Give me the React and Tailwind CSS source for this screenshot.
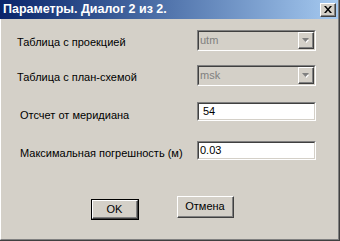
import React from "react";

const sunken =
  "border-t border-l border-t-[#808080] border-l-[#808080] border-b border-r border-b-white border-r-white";
const sunkenInner =
  "border-t border-l border-t-[#404040] border-l-[#404040] border-b border-r border-b-[#d4d0c8] border-r-[#d4d0c8]";
const raised =
  "border-t border-l border-t-white border-l-white border-b border-r border-b-[#404040] border-r-[#404040]";
const raisedInner = "border-b border-r border-b-[#808080] border-r-[#808080]";

function Combo({ value }) {
  return (
    <div className={`w-[119px] h-[21px] ${sunken}`}>
      <div className={`h-full flex items-center ${sunkenInner} bg-[#d4d0c8]`}>
        <span className="flex-1 pl-[1px] text-[11px] leading-none text-[#808080]">{value}</span>
        <div className={`w-[16px] h-full ${raised} bg-[#d4d0c8]`}>
          <div className={`h-full flex items-center justify-center ${raisedInner}`}>
            <svg width="7" height="5" viewBox="0 0 7 5">
              <path d="M1 1h5l-2.5 3z" fill="#ffffff" transform="translate(1 1)" />
              <path d="M0 0h7L3.5 4z" fill="#808080" />
            </svg>
          </div>
        </div>
      </div>
    </div>
  );
}

function Field({ value, pad }) {
  return (
    <div className={`w-[119px] h-[19px] ${sunken}`}>
      <div className={`h-full flex items-center ${sunkenInner} bg-white`}>
        <span className={`${pad} text-[11px] leading-none text-black`}>{value}</span>
      </div>
    </div>
  );
}

export default function App() {
  return (
    <div
      className="w-[340px] h-[241px] bg-[#d4d0c8] border-r border-b border-r-[#404040] border-b-[#404040] flex flex-col"
      style={{ fontFamily: '"Liberation Sans", Arial, sans-serif' }}
    >
      <div className="flex-1 flex flex-col border-r border-b border-r-[#808080] border-b-[#808080] border-l border-l-white">
        <div className="h-[19px] -ml-[1px] flex items-center justify-between pl-[3px] pr-[2px] bg-gradient-to-r from-[#0a246a] to-[#a6caf0]">
          <span className="text-white font-bold text-[12.5px] leading-none">Параметры. Диалог 2 из 2.</span>
          <div className={`w-[16px] h-[14px] ${raised} bg-[#d4d0c8]`}>
            <div className={`h-full flex items-center justify-center ${raisedInner}`}>
              <svg width="8" height="7" viewBox="0 0 8 7">
                <path d="M0 0h2l2 2.5L6 0h2L5 3.5 8 7H6L4 4.5 2 7H0l3-3.5z" fill="#000" />
              </svg>
            </div>
          </div>
        </div>

        <div className="flex flex-col text-[11px] text-black">
          <div className="mt-[11px] flex items-center">
            <span className="w-[196px] pl-[16px] pt-[3px]">Таблица с проекцией</span>
            <Combo value="utm" />
          </div>
          <div className="mt-[14px] flex items-center">
            <span className="w-[196px] pl-[16px] pt-[3px]">Таблица с план-схемой</span>
            <Combo value="msk" />
          </div>
          <div className="mt-[13px] flex items-center">
            <span className="w-[196px] pl-[19px] pt-[8px]">Отсчет от меридиана</span>
            <Field value="54" pad="pl-[4px]" />
          </div>
          <div className="mt-[17px] flex items-center">
            <span className="w-[196px] pl-[19px] pt-[4px]">Максимальная погрешность (м)</span>
            <Field value="0.03" pad="pl-[1px]" />
          </div>

          <div className="mt-[35px] flex items-start">
            <div className="ml-[90px] mt-[3px] w-[48px] h-[21px] border border-black">
              <div className={`h-full ${raised}`}>
                <div className={`h-full flex items-center justify-center ${raisedInner}`}>OK</div>
              </div>
            </div>
            <div className={`ml-[38px] w-[57px] h-[22px] ${raised}`}>
              <div className={`h-full flex items-center justify-center ${raisedInner}`}>Отмена</div>
            </div>
          </div>
        </div>
      </div>
    </div>
  );
}
